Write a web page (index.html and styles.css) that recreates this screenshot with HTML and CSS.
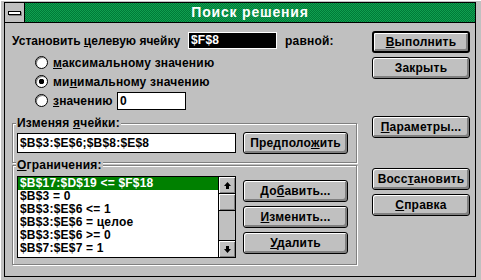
FILE: index.html
```html
<!DOCTYPE html>
<html>
<head>
  <meta charset="utf-8">
  <title>Поиск решения</title>
  <link rel="stylesheet" href="styles.css">
</head>
<body>
  <div class="frame">
    <div class="window">
      <div class="titlebar">
        <div class="sysmenu"><span class="dash"></span></div>
        <div class="title">Поиск решения</div>
      </div>

      <div class="client">
        <div class="left">
          <div class="target">
            <span class="target-label">Установить <u>ц</u>елевую ячейку</span>
            <span class="field selected">$F$8</span>
            <span class="equal">равной:</span>
          </div>

          <div class="radios">
            <div class="radio"><span class="dot"></span><span><u>м</u>аксимальному значению</span></div>
            <div class="radio"><span class="dot on"></span><span>ми<u>н</u>имальному значению</span></div>
            <div class="radio"><span class="dot"></span><span class="value-label"><u>з</u>начению</span><span class="field value">0</span></div>
          </div>

          <fieldset class="group changing">
            <legend>Изменяя <u>я</u>чейки:</legend>
            <div class="group-row">
              <div class="field wide">$B$3:$E$6;$B$8:$E$8</div>
              <button class="btn">Предполо<u>ж</u>ить</button>
            </div>
          </fieldset>

          <fieldset class="group limits">
            <legend><u>О</u>граничения:</legend>
            <div class="group-row">
              <div class="listbox">
                <ul class="items">
                  <li class="active">$B$17:$D$19 &lt;= $F$18</li>
                  <li>$B$3 = 0</li>
                  <li>$B$3:$E$6 &lt;= 1</li>
                  <li>$B$3:$E$6 = целое</li>
                  <li>$B$3:$E$6 &gt;= 0</li>
                  <li>$B$7:$E$7 = 1</li>
                </ul>
                <div class="scrollbar">
                  <div class="sb-btn up">
                    <svg width="7" height="7" viewBox="0 0 7 7"><path d="M3.5 0 L7 4 H5 V7 H2 V4 H0 Z" fill="#000"/></svg>
                  </div>
                  <div class="sb-thumb"></div>
                  <div class="sb-track"></div>
                  <div class="sb-btn down">
                    <svg width="7" height="7" viewBox="0 0 7 7"><path d="M3.5 7 L7 3 H5 V0 H2 V3 H0 Z" fill="#000"/></svg>
                  </div>
                </div>
              </div>
              <div class="side-buttons">
                <button class="btn">До<u>б</u>авить...</button>
                <button class="btn"><u>И</u>зменить...</button>
                <button class="btn"><u>У</u>далить</button>
              </div>
            </div>
          </fieldset>
        </div>

        <div class="right">
          <button class="btn default run"><u>В</u>ыполнить</button>
          <button class="btn close">Закрыть</button>
          <button class="btn options"><u>П</u>араметры...</button>
          <button class="btn reset">Восс<u>т</u>ановить</button>
          <button class="btn help"><u>С</u>правка</button>
        </div>
      </div>
    </div>
  </div>
</body>
</html>
```

FILE: styles.css
```css
/* Windows 3.1 style solver dialog */
* {
  box-sizing: border-box;
}

body {
  margin: 0;
  background-color: #c0c0c0;
  font: bold 12px "Liberation Sans", Arial, sans-serif;
  letter-spacing: 0.2px;
  color: #000;
}

.frame {
  width: 481px;
  height: 280px;
  padding: 1px 5px 3px 3px;
  border-top: 1px solid #fff;
  border-left: 1px solid #fff;
}

.window {
  height: 100%;
  border: 1px solid #000;
  display: flex;
  flex-direction: column;
}

.titlebar {
  height: 20px;
  display: flex;
  border-bottom: 1px solid #000;
}

.sysmenu {
  width: 20px;
  border-right: 1px solid #000;
  background-color: #c0c0c0;
  display: flex;
  align-items: center;
  justify-content: center;
}

.dash {
  width: 13px;
  height: 4px;
  border: 1px solid #000;
  background-color: #fff;
  box-shadow: 1px 1px 0 #808080;
  margin-top: 1px;
}

.title {
  flex: 1;
  background: repeating-conic-gradient(#007a38 0 25%, #10a050 0 50%) 0 0 / 2px 2px;
  color: #fff;
  font-size: 14px;
  line-height: 19px;
  text-align: center;
  letter-spacing: 0.8px;
}

.client {
  flex: 1;
  display: grid;
  grid-template-columns: 346px 98px;
  column-gap: 14px;
  align-items: start;
  padding: 0 5px 0 7px;
}

.left {
  display: flex;
  flex-direction: column;
}

.target {
  display: flex;
  align-items: center;
  height: 17px;
  margin-top: 9px;
}

.target-label {
  flex: none;
  width: 176px;
  white-space: nowrap;
  letter-spacing: 0;
}

.field {
  flex: none;
  border: 1px solid #000;
  background-color: #fff;
  padding: 0 2px;
  white-space: nowrap;
  overflow: hidden;
}

.field.selected {
  width: 89px;
  height: 17px;
  line-height: 15px;
  background-color: #000;
  color: #fff;
  border-color: #fff;
}

.equal {
  margin-left: 8px;
}

.radios {
  margin-top: 4px;
  padding-left: 23px;
}

.radio {
  display: flex;
  align-items: center;
  height: 19px;
  white-space: nowrap;
}

.dot {
  flex: none;
  width: 13px;
  height: 13px;
  border-radius: 50%;
  border: 1px solid #000;
  background-color: #fff;
  box-shadow: inset 1px 1px 0 #808080;
  margin-right: 5px;
}

.dot.on {
  background: radial-gradient(circle, #000 0 2.5px, #fff 3px);
}

.value-label {
  flex: none;
  width: 64px;
}

.field.value {
  width: 69px;
  height: 18px;
  line-height: 16px;
}

.group {
  width: 345px;
  min-width: 0;
  margin: 0;
  border: 1px solid #808080;
  box-shadow: inset 1px 1px 0 #fff, 1px 1px 0 #fff;
}

.group legend {
  padding: 0 1px;
  margin-left: -1px;
  line-height: 14px;
  background-color: #c0c0c0;
}

.changing {
  margin-top: 6px;
  padding: 2px 8px 8px 4px;
}

.limits {
  margin-top: -5px;
  padding: 4px 8px 6px 4px;
}

.group-row {
  display: flex;
  align-items: center;
  gap: 7px;
}

.limits .group-row {
  align-items: flex-start;
}

.field.wide {
  width: 219px;
  height: 20px;
  line-height: 18px;
}

.listbox {
  flex: none;
  width: 219px;
  height: 82px;
  border: 1px solid #000;
  background-color: #fff;
  display: flex;
}

.items {
  flex: 1;
  list-style: none;
  margin: 0;
  padding: 0;
}

.items li {
  height: 13px;
  line-height: 13px;
  padding-left: 2px;
  white-space: nowrap;
}

.items li.active {
  background-color: #008000;
  color: #fff;
}

.scrollbar {
  width: 17px;
  border-left: 1px solid #000;
  display: flex;
  flex-direction: column;
  background-color: #c0c0c0;
}

.sb-btn,
.sb-thumb {
  height: 17px;
  background-color: #c0c0c0;
  box-shadow: inset 1px 1px 0 #fff, inset -1px -1px 0 #808080;
}

.sb-btn {
  display: flex;
  align-items: center;
  justify-content: center;
}

.sb-btn.up,
.sb-thumb {
  border-bottom: 1px solid #000;
}

.sb-btn.down {
  border-top: 1px solid #000;
}

.sb-track {
  flex: 1;
}

.side-buttons {
  display: flex;
  flex-direction: column;
  gap: 4px;
  margin-top: 4px;
  width: 105px;
}

.btn {
  display: block;
  width: 105px;
  height: 22px;
  padding: 0;
  border: 1px solid #000;
  border-radius: 3px;
  background-color: #c0c0c0;
  box-shadow: inset 1px 1px 0 #fff, inset -2px -2px 0 #808080;
  font: inherit;
  letter-spacing: inherit;
  color: #000;
  white-space: nowrap;
}

.right {
  display: flex;
  flex-direction: column;
}

.right .btn {
  width: 98px;
}

.btn.default {
  border-width: 2px;
}

.run {
  margin-top: 8px;
}

.close {
  margin-top: 4px;
}

.options {
  margin-top: 37px;
}

.reset {
  margin-top: 30px;
}

.help {
  margin-top: 4px;
}
```
